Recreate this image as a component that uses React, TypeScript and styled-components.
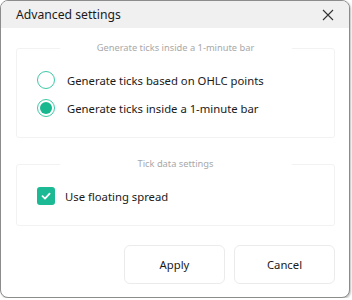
import React from "react";
import styled, { createGlobalStyle } from "styled-components";

const Global = createGlobalStyle`
  html, body { margin: 0; padding: 0; background: #ffffff; }
  body { font-family: "Noto Sans", "Open Sans", sans-serif; }
`;

const Window = styled.div`
  box-sizing: border-box;
  width: 350px;
  height: 298px;
  border: 1px solid #8c8c8c;
  border-radius: 8px;
  background: #ffffff;
  overflow: hidden;
  display: flex;
  flex-direction: column;
  box-shadow: 1px 1px 2px rgba(0,0,0,0.25);
`;

const TitleBar = styled.div`
  height: 27px;
  background: #f0f0f0;
  display: flex;
  align-items: center;
  justify-content: space-between;
  padding: 0 14px 0 15px;
  flex-shrink: 0;
`;

const Title = styled.span`
  font-size: 12.2px;
  color: #1a1a1a;
`;

const CloseButton = styled.div`
  width: 14px;
  height: 14px;
  display: flex;
  align-items: center;
  justify-content: center;
`;

const Body = styled.div`
  padding: 13px 14px 0 15px;
  display: flex;
  flex-direction: column;
`;

const Group = styled.fieldset<{ $h: number; $mt?: number }>`
  box-sizing: border-box;
  margin: ${(p) => p.$mt ?? 0}px 0 0 0;
  height: ${(p) => p.$h}px;
  border: 1.5px solid #f2f2f2;
  border-radius: 3px;
  padding: 0 20px;
  min-width: 0;
`;

const Legend = styled.legend`
  margin: 0 auto;
  padding: 0 10px;
  width: 212px;
  text-align: center;
  font-size: 9.3px;
  color: #a8a8a8;
  line-height: 14px;
`;

const OptionList = styled.div<{ $pt: number }>`
  display: flex;
  flex-direction: column;
  gap: 10px;
  padding-top: ${(p) => p.$pt}px;
`;

const Option = styled.label<{ $gap?: number }>`
  display: flex;
  align-items: center;
  gap: ${(p) => p.$gap ?? 12}px;
  font-size: 11.3px;
  color: #1a1a1a;
  height: 18px;
`;

const Radio = styled.span<{ $checked: boolean }>`
  box-sizing: border-box;
  width: 18px;
  height: 18px;
  border-radius: 50%;
  border: 1.5px solid #3cc8a8;
  display: flex;
  align-items: center;
  justify-content: center;
  flex-shrink: 0;
  &::after {
    content: "";
    display: ${(p) => (p.$checked ? "block" : "none")};
    width: 12px;
    height: 12px;
    border-radius: 50%;
    background: #17b890;
  }
`;

const Check = styled.span`
  box-sizing: border-box;
  width: 18px;
  height: 18px;
  border-radius: 3px;
  background: #1bb994;
  display: flex;
  align-items: center;
  justify-content: center;
  flex-shrink: 0;
`;

const Footer = styled.div`
  display: flex;
  justify-content: flex-end;
  gap: 9px;
  padding: 19px 14px 0 0;
`;

const Button = styled.button`
  box-sizing: border-box;
  width: 101px;
  height: 39px;
  border: 1px solid #ebebeb;
  border-radius: 6px;
  background: #ffffff;
  font-family: "Noto Sans", "Open Sans", sans-serif;
  font-size: 11.3px;
  color: #1a1a1a;
  padding: 0;
`;

export default function App() {
  return (
    <>
      <Global />
      <Window>
        <TitleBar>
          <Title>Advanced settings</Title>
          <CloseButton>
            <svg width="12" height="12" viewBox="0 0 12 12">
              <path d="M1 1L11 11M11 1L1 11" stroke="#333" strokeWidth="1.1" />
            </svg>
          </CloseButton>
        </TitleBar>
        <Body>
          <Group $h={97}>
            <Legend>Generate ticks inside a 1-minute bar</Legend>
            <OptionList $pt={16}>
              <Option>
                <Radio $checked={false} />
                Generate ticks based on OHLC points
              </Option>
              <Option>
                <Radio $checked={true} />
                Generate ticks inside a 1-minute bar
              </Option>
            </OptionList>
          </Group>
          <Group $h={69} $mt={19}>
            <Legend>Tick data settings</Legend>
            <OptionList $pt={16}>
              <Option $gap={10}>
                <Check>
                  <svg width="12" height="12" viewBox="0 0 12 12">
                    <path d="M2.5 6.2L5 8.6L9.6 3.6" stroke="#fff" strokeWidth="1.8" fill="none" strokeLinecap="round" strokeLinejoin="round" />
                  </svg>
                </Check>
                Use floating spread
              </Option>
            </OptionList>
          </Group>
        </Body>
        <Footer>
          <Button>Apply</Button>
          <Button>Cancel</Button>
        </Footer>
      </Window>
    </>
  );
}
